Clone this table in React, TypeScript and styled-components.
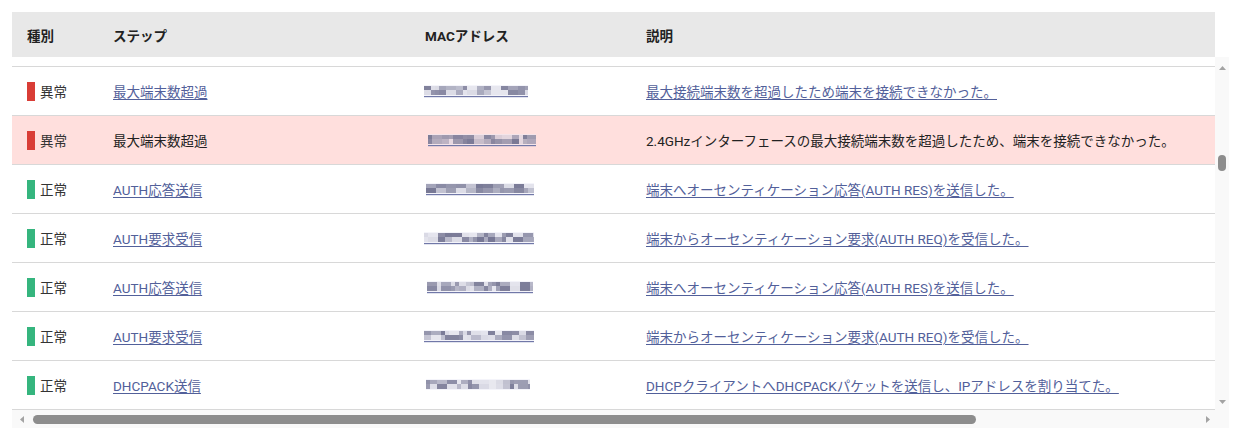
import React from "react";
import styled, { createGlobalStyle } from "styled-components";

const Global = createGlobalStyle`
  html, body { margin: 0; padding: 0; background: #ffffff; }
  body { font-family: Roboto, "Noto Sans CJK JP", sans-serif; color: #222; }
`;

const Page = styled.div`
  padding: 12px 0 0 12px;
`;

const Frame = styled.div`
  display: grid;
  grid-template-columns: 1203px 14px;
  grid-template-rows: 45px 353px 18px;
`;

const COLS = "86px 312px 221px 1fr";

const HeaderRow = styled.div`
  grid-column: 1;
  grid-row: 1;
  display: grid;
  grid-template-columns: ${COLS};
  align-items: center;
  padding-left: 15px;
  background: #e8e8e8;
  font-size: 13.5px;
  font-weight: 700;
  color: #222;
`;

const Body = styled.div`
  grid-column: 1;
  grid-row: 2;
  overflow: hidden;
  display: flex;
  flex-direction: column;
`;

const Spacer = styled.div`
  height: 9px;
  flex: none;
  border-bottom: 1px solid #d8d8d8;
`;

const Row = styled.div<{ $alert?: boolean }>`
  flex: none;
  height: 48px;
  display: grid;
  grid-template-columns: ${COLS};
  align-items: center;
  padding-left: 15px;
  border-bottom: 1px solid #d8d8d8;
  background: ${(p) => (p.$alert ? "#ffdfdd" : "#ffffff")};
  font-size: 13.5px;
  white-space: nowrap;
`;

const Kind = styled.div`
  display: flex;
  align-items: center;
  gap: 5px;
  color: #333;
`;

const Marker = styled.span<{ $color: string }>`
  width: 8px;
  height: 19px;
  background: ${(p) => p.$color};
  display: inline-block;
`;

const Link = styled.a`
  color: #52609a;
  text-decoration: underline;
  text-underline-offset: 2px;
  text-decoration-thickness: 1px;
  cursor: pointer;
`;

const Plain = styled.span`
  color: #222;
`;

const MacCell = styled.div`
  display: flex;
  align-items: center;
  margin-left: -1px;
`;

const VScroll = styled.div`
  grid-column: 2;
  grid-row: 2;
  background: #f9f9f9;
  display: flex;
  flex-direction: column;
  align-items: center;
  padding-top: 9px;
`;

const HScroll = styled.div`
  grid-column: 1;
  grid-row: 3;
  background: #f9f9f9;
  display: flex;
  align-items: center;
  padding: 0 5px 0 8px;
`;

const Corner = styled.div`
  grid-column: 2;
  grid-row: 3;
  background: #f9f9f9;
`;

const VThumb = styled.div`
  width: 8px;
  height: 16px;
  border-radius: 4px;
  background: #8d8d8d;
  margin-top: 85px;
`;

const VFill = styled.div`
  flex: 1;
`;

const HThumb = styled.div`
  height: 9px;
  width: 943px;
  border-radius: 5px;
  background: #8d8d8d;
  margin-left: 9px;
`;

const HFill = styled.div`
  flex: 1;
`;

const Arrow = ({ dir }: { dir: "up" | "down" | "left" | "right" }) => {
  const pts: Record<string, string> = {
    up: "0,4 3.5,0 7,4",
    down: "0,0 3.5,4 7,0",
    left: "4,0 0,3.5 4,7",
    right: "0,0 4,3.5 0,7",
  };
  const vertical = dir === "up" || dir === "down";
  return (
    <svg width={vertical ? 7 : 4} height={vertical ? 4 : 7} viewBox={vertical ? "0 0 7 4" : "0 0 4 7"}>
      <polygon points={pts[dir]} fill="#a3a3a3" />
    </svg>
  );
};

function rng(seed: number) {
  let s = seed;
  return () => {
    s = (s * 9301 + 49297) % 233280;
    return s / 233280;
  };
}

const MacBlur = ({ seed, width, underline }: { seed: number; width: number; underline: boolean }) => {
  const r = rng(seed);
  const cells: React.ReactNode[] = [];
  let x = 0;
  let k = 0;
  while (x < width) {
    const w = Math.min(width - x, 4 + Math.floor(r() * 3) * 3);
    for (let j = 0; j < 2; j++) {
      const v = r();
      const light = v < 0.35;
      const op = light ? 0.08 + v * 0.3 : 0.3 + (v - 0.35) * 0.9;
      cells.push(
        <rect key={k++} x={x} y={j === 0 ? 2 : 6} width={w} height={j === 0 ? 4 : 5} fill="#646585" opacity={op} />
      );
    }
    x += w;
  }
  return (
    <svg width={width} height={15} viewBox={`0 0 ${width} 15`}>
      <rect x={0} y={1} width={width} height={11} fill="#e9e9f6" opacity={0.5} />
      {cells}
      {underline && <rect x={0} y={12} width={width} height={1.2} fill="#7178a8" />}
    </svg>
  );
};

type Item = {
  ok: boolean;
  step: string;
  desc: string;
  alert?: boolean;
  mac: { seed: number; width: number; offset: number; underline: boolean };
};

const items: Item[] = [
  { ok: false, step: "最大端末数超過", desc: "最大接続端末数を超過したため端末を接続できなかった。", mac: { seed: 11, width: 104, offset: 0, underline: true } },
  { ok: false, alert: true, step: "最大端末数超過", desc: "2.4GHzインターフェースの最大接続端末数を超過したため、端末を接続できなかった。", mac: { seed: 23, width: 108, offset: 4, underline: true } },
  { ok: true, step: "AUTH応答送信", desc: "端末へオーセンティケーション応答(AUTH RES)を送信した。", mac: { seed: 37, width: 108, offset: 2, underline: true } },
  { ok: true, step: "AUTH要求受信", desc: "端末からオーセンティケーション要求(AUTH REQ)を受信した。", mac: { seed: 51, width: 110, offset: 0, underline: true } },
  { ok: true, step: "AUTH応答送信", desc: "端末へオーセンティケーション応答(AUTH RES)を送信した。", mac: { seed: 67, width: 106, offset: 3, underline: true } },
  { ok: true, step: "AUTH要求受信", desc: "端末からオーセンティケーション要求(AUTH REQ)を受信した。", mac: { seed: 79, width: 110, offset: 0, underline: true } },
  { ok: true, step: "DHCPACK送信", desc: "DHCPクライアントへDHCPACKパケットを送信し、IPアドレスを割り当てた。", mac: { seed: 97, width: 104, offset: 2, underline: false } },
];

export default function App() {
  return (
    <Page>
      <Global />
      <Frame>
        <HeaderRow>
          <div>種別</div>
          <div>ステップ</div>
          <div>MACアドレス</div>
          <div>説明</div>
        </HeaderRow>
        <Body>
          <Spacer />
          {items.map((it, i) => (
            <Row key={i} $alert={it.alert}>
              <Kind>
                <Marker $color={it.ok ? "#35b57e" : "#d93d36"} />
                {it.ok ? "正常" : "異常"}
              </Kind>
              <div>{it.alert ? <Plain>{it.step}</Plain> : <Link>{it.step}</Link>}</div>
              <MacCell style={{ paddingLeft: it.mac.offset }}>
                <MacBlur seed={it.mac.seed} width={it.mac.width} underline={it.mac.underline} />
              </MacCell>
              <div>{it.alert ? <Plain>{it.desc}</Plain> : <Link>{it.desc}</Link>}</div>
            </Row>
          ))}
        </Body>
        <VScroll>
          <Arrow dir="up" />
          <VThumb />
          <VFill />
          <Arrow dir="down" />
          <div style={{ height: 6 }} />
        </VScroll>
        <HScroll>
          <Arrow dir="left" />
          <HThumb />
          <HFill />
          <Arrow dir="right" />
        </HScroll>
        <Corner />
      </Frame>
    </Page>
  );
}
